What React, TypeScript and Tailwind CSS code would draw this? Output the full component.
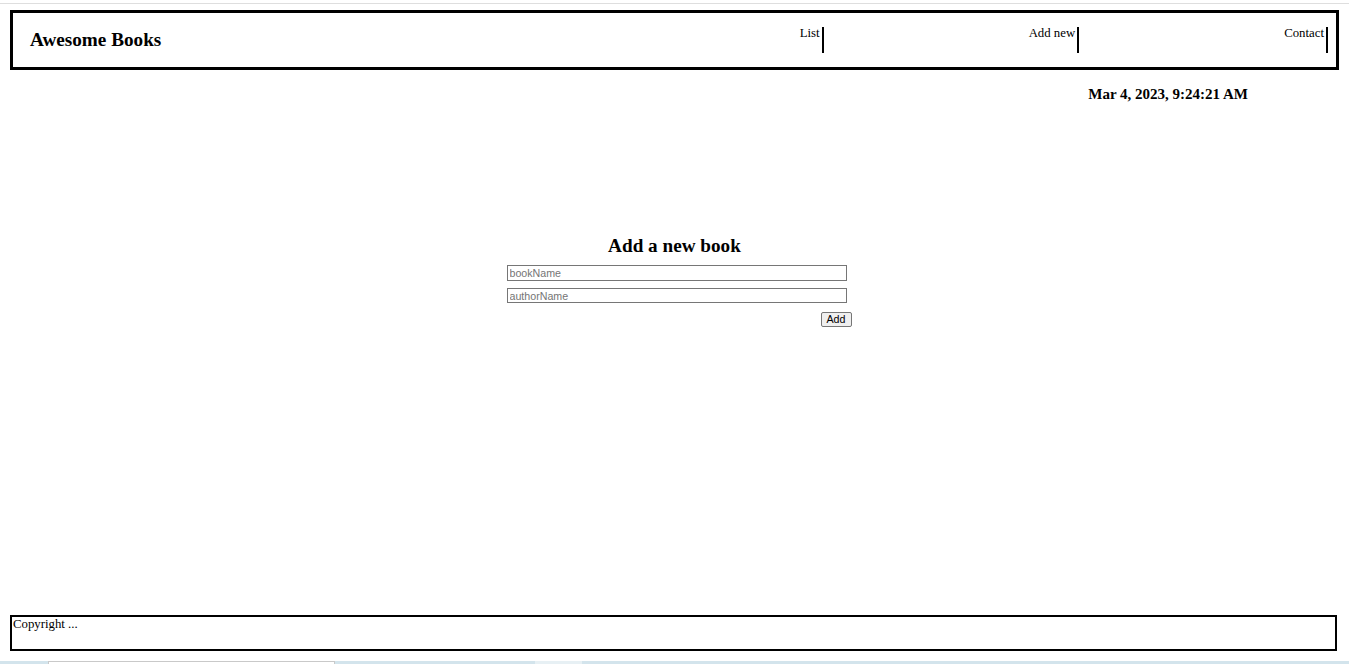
import React from "react";

const serif = { fontFamily: '"Liberation Serif", "Times New Roman", serif' };

export default function App() {
  return (
    <div className="w-[1349px] h-[664px] bg-white text-black overflow-hidden flex flex-col" style={serif}>
      <div className="h-[3px]" />
      <div className="h-[1px] bg-[#dedede]" />
      <div className="h-[6px]" />
      <header className="ml-[10px] w-[1329px] h-[60px] border-[3px] border-black flex items-center justify-between">
        <h1 className="pl-[17px] text-[19.2px] font-bold leading-[22px]">Awesome Books</h1>
        <ul className="flex items-center gap-[205px] pr-[8px] text-[12.8px] leading-[13px]">
          <li className="h-[26px] pr-[2px] border-r-2 border-black">List</li>
          <li className="h-[26px] pr-[2px] border-r-2 border-black">Add new</li>
          <li className="h-[26px] pr-[2px] border-r-2 border-black">Contact</li>
        </ul>
      </header>
      <div className="mt-[15px] flex justify-end pr-[101px]">
        <p className="text-[15px] font-bold leading-[18px]">Mar 4, 2023, 9:24:21 AM</p>
      </div>
      <main className="mt-[132px] flex flex-col items-center">
        <h2 className="text-[19.2px] font-bold leading-[22px]">Add a new book</h2>
        <div className="mt-[8px] ml-[9px] w-[345px] flex flex-col">
          <input
            placeholder="bookName"
            className="w-[340px] h-[16px] border border-[#767676] px-[2px] text-[10.67px] leading-[14px] placeholder:text-[#757575] outline-none"
            style={{ fontFamily: '"Liberation Sans", Arial, sans-serif' }}
          />
          <input
            placeholder="authorName"
            className="mt-[7px] w-[340px] h-[15px] border border-[#767676] px-[2px] text-[10.67px] leading-[13px] placeholder:text-[#757575] outline-none"
            style={{ fontFamily: '"Liberation Sans", Arial, sans-serif' }}
          />
          <div className="mt-[9px] flex justify-end">
            <button
              className="w-[31px] h-[15px] border border-[#767676] rounded-[2px] bg-[#efefef] text-[10.67px] leading-[13px] text-black"
              style={{ fontFamily: '"Liberation Sans", Arial, sans-serif' }}
            >
              Add
            </button>
          </div>
        </div>
      </main>
      <div className="flex-1" />
      <footer className="ml-[10px] w-[1327px] h-[36px] border-2 border-black text-[12.8px] leading-[15px] pl-[1px]">
        Copyright ...
      </footer>
      <div className="h-[10px]" />
      <div className="h-[3px] bg-[#d3e4ec] flex">
        <div className="ml-[48px] w-[287px] bg-white border-t border-x border-[#c9c9c9]" />
        <div className="ml-[200px] w-[47px] bg-[#e7f0f4]" />
      </div>
    </div>
  );
}
